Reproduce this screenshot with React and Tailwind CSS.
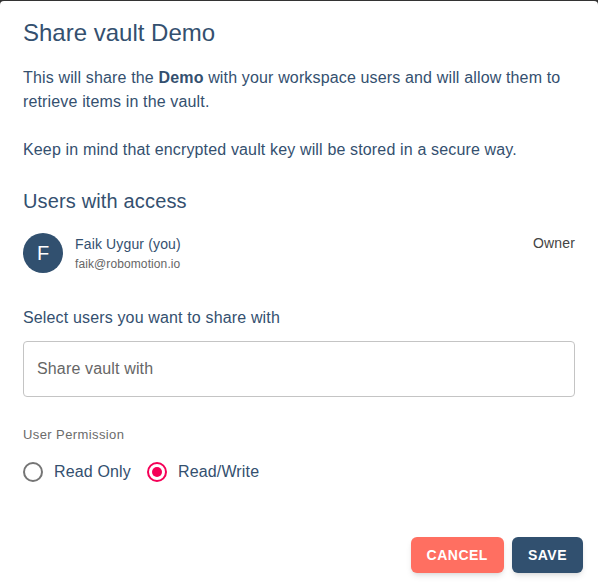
function Radio({ checked, label }) {
  return (
    <label className="flex items-center gap-[11px]">
      {checked ? (
        <span className="w-5 h-5 rounded-full border-2 border-[#f50057] flex items-center justify-center">
          <span className="w-[10px] h-[10px] rounded-full bg-[#f50057]" />
        </span>
      ) : (
        <span className="w-5 h-5 rounded-full border-2 border-[#757575]" />
      )}
      <span className="text-[16px] tracking-[0.15px] text-[#34506f]">{label}</span>
    </label>
  );
}

export default function App() {
  return (
    <div
      className="w-[598px] h-[588px] bg-[#333] pt-px overflow-hidden"
      style={{ fontFamily: "'Liberation Sans', Arial, sans-serif" }}
    >
      <div className="bg-white rounded-t-[4px] h-full px-[23px] pt-[16px] text-[#34506f]">
        <h2 className="text-[24px] leading-[32px]">Share vault Demo</h2>

        <div className="mt-[17px] text-[16px] leading-[24px] tracking-[0.15px]">
          <p>
            This will share the <b>Demo</b> with your workspace users and will allow them to retrieve items in the vault.
          </p>
          <p className="mt-[24px]">Keep in mind that encrypted vault key will be stored in a secure way.</p>
        </div>

        <h3 className="mt-[23px] text-[20px] leading-[32px] tracking-[0.15px]">Users with access</h3>

        <div className="mt-[16px] flex items-start">
          <div className="w-10 h-10 rounded-full bg-[#31506f] text-white flex items-center justify-center text-[20px]">
            F
          </div>
          <div className="ml-3 flex-1 pt-[1px]">
            <div className="text-[14px] leading-[20px] tracking-[0.15px]">Faik Uygur (you)</div>
            <div className="text-[12px] leading-[20px] tracking-[0.1px] text-[#666]">faik@robomotion.io</div>
          </div>
          <div className="text-[14px] leading-[20px] tracking-[0.15px] text-[#444]">Owner</div>
        </div>

        <div className="mt-[32px] text-[16px] leading-[24px] tracking-[0.15px]">Select users you want to share with</div>

        <div className="mt-[11px] h-[56px] border border-[#c4c4c4] rounded-[4px] flex items-center px-[13px] text-[16px] tracking-[0.15px] text-[#666]">
          Share vault with
        </div>

        <div className="mt-[28px] text-[13px] leading-[20px] tracking-[0.4px] text-[#6b6b6b]">User Permission</div>

        <div className="mt-[15px] flex items-center gap-[16px]">
          <Radio label="Read Only" />
          <Radio checked label="Read/Write" />
        </div>

        <div className="mt-[53px] flex justify-end gap-2 -mr-[8px]">
          <button className="h-9 px-4 rounded-[6px] bg-[#ff6f61] text-white font-bold text-[14px] tracking-[0.5px] shadow-md">
            CANCEL
          </button>
          <button className="h-9 px-4 rounded-[6px] bg-[#31506f] text-white font-bold text-[14px] tracking-[0.5px] shadow-md">
            SAVE
          </button>
        </div>
      </div>
    </div>
  );
}
